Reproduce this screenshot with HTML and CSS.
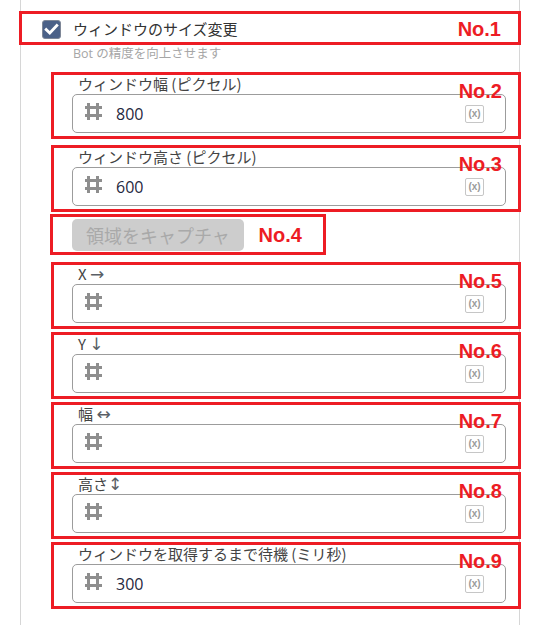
FILE: index.html
```html
<!DOCTYPE html>
<html lang="ja">
<head>
<meta charset="utf-8">
<title>ウィンドウのサイズ変更</title>
<link rel="stylesheet" href="styles.css">
</head>
<body>
<div class="panel">
  <div class="check-row">
    <span class="checkbox">
      <svg width="17" height="17" viewBox="0 0 17 17"><path d="M3.2 8.6 L6.8 12 L13.8 4.6" fill="none" stroke="#fff" stroke-width="2.8" stroke-linecap="square"/></svg>
    </span>
    <span class="check-title">ウィンドウのサイズ変更</span>
    <div class="mark mark-row"><span class="mark-no">No.1</span></div>
  </div>
  <div class="hint">Bot の精度を向上させます</div>

  <div class="fields">
    <div class="field field-first">
      <div class="field-label">ウィンドウ幅 (ピクセル)</div>
      <div class="input">
        <svg class="hash" width="17" height="17" viewBox="0 0 17 17"><path d="M3.5 0v17M12.5 0v17M0 4.5h17M0 12.5h17" stroke="#8e8e8e" stroke-width="3"/></svg>
        <span class="value">800</span>
        <span class="var">(x)</span>
      </div>
      <div class="mark"><span class="mark-no">No.2</span></div>
    </div>

    <div class="field field-second">
      <div class="field-label">ウィンドウ高さ (ピクセル)</div>
      <div class="input">
        <svg class="hash" width="17" height="17" viewBox="0 0 17 17"><path d="M3.5 0v17M12.5 0v17M0 4.5h17M0 12.5h17" stroke="#8e8e8e" stroke-width="3"/></svg>
        <span class="value">600</span>
        <span class="var">(x)</span>
      </div>
      <div class="mark"><span class="mark-no">No.3</span></div>
    </div>

    <div class="action">
      <button class="capture" type="button" disabled>領域をキャプチャ</button>
      <div class="mark mark-action"><span class="mark-no">No.4</span></div>
    </div>

    <div class="field field-after-action">
      <div class="field-label">X <span class="arrow">&#x2192;&#xFE0E;</span></div>
      <div class="input">
        <svg class="hash" width="17" height="17" viewBox="0 0 17 17"><path d="M3.5 0v17M12.5 0v17M0 4.5h17M0 12.5h17" stroke="#8e8e8e" stroke-width="3"/></svg>
        <span class="value"></span>
        <span class="var">(x)</span>
      </div>
      <div class="mark"><span class="mark-no">No.5</span></div>
    </div>

    <div class="field">
      <div class="field-label">Y <span class="arrow">&#x2193;&#xFE0E;</span></div>
      <div class="input">
        <svg class="hash" width="17" height="17" viewBox="0 0 17 17"><path d="M3.5 0v17M12.5 0v17M0 4.5h17M0 12.5h17" stroke="#8e8e8e" stroke-width="3"/></svg>
        <span class="value"></span>
        <span class="var">(x)</span>
      </div>
      <div class="mark"><span class="mark-no">No.6</span></div>
    </div>

    <div class="field">
      <div class="field-label">幅 <span class="arrow">&#x2194;&#xFE0E;</span></div>
      <div class="input">
        <svg class="hash" width="17" height="17" viewBox="0 0 17 17"><path d="M3.5 0v17M12.5 0v17M0 4.5h17M0 12.5h17" stroke="#8e8e8e" stroke-width="3"/></svg>
        <span class="value"></span>
        <span class="var">(x)</span>
      </div>
      <div class="mark"><span class="mark-no">No.7</span></div>
    </div>

    <div class="field">
      <div class="field-label">高さ<span class="arrow">&#x2195;&#xFE0E;</span></div>
      <div class="input">
        <svg class="hash" width="17" height="17" viewBox="0 0 17 17"><path d="M3.5 0v17M12.5 0v17M0 4.5h17M0 12.5h17" stroke="#8e8e8e" stroke-width="3"/></svg>
        <span class="value"></span>
        <span class="var">(x)</span>
      </div>
      <div class="mark"><span class="mark-no">No.8</span></div>
    </div>

    <div class="field">
      <div class="field-label">ウィンドウを取得するまで待機 (ミリ秒)</div>
      <div class="input">
        <svg class="hash" width="17" height="17" viewBox="0 0 17 17"><path d="M3.5 0v17M12.5 0v17M0 4.5h17M0 12.5h17" stroke="#8e8e8e" stroke-width="3"/></svg>
        <span class="value">300</span>
        <span class="var">(x)</span>
      </div>
      <div class="mark"><span class="mark-no">No.9</span></div>
    </div>
  </div>
</div>
</body>
</html>
```

FILE: styles.css
```css
html, body {
  margin: 0;
  padding: 0;
  background: #ffffff;
}

body {
  font-family: "Open Sans", "Noto Sans CJK JP", sans-serif;
  color: #3a3a3a;
}

.panel {
  margin-left: 20px;
  width: 500px;
  min-height: 625px;
  box-sizing: border-box;
  border-left: 1px solid #d6d6d6;
  border-right: 1px solid #d6d6d6;
  padding-top: 19px;
}

.check-row {
  position: relative;
  display: flex;
  align-items: center;
  gap: 12px;
  height: 20px;
  padding-left: 21px;
}

.checkbox {
  width: 19px;
  height: 19px;
  box-sizing: border-box;
  background: #4b6188;
  border: 1px solid #7e8797;
  border-radius: 3px;
  display: flex;
  align-items: center;
  justify-content: center;
}

.check-title {
  font-family: "Noto Sans CJK JP", sans-serif;
  font-size: 15px;
  line-height: 20px;
  color: #333333;
}

.hint {
  margin: 6px 0 0 52px;
  font-size: 12.5px;
  line-height: 18px;
  color: #a6a6a6;
}

.fields {
  margin-left: 51px;
  margin-right: 13px;
}

.field {
  position: relative;
  margin-top: 10px;
}

.field-second {
  margin-top: 13px;
}

.field-after-action {
  margin-top: 12px;
}

.field-label {
  padding-left: 6px;
  height: 21px;
  font-family: "Noto Sans CJK JP", sans-serif;
  font-size: 15px;
  line-height: 21px;
  color: #444444;
  white-space: nowrap;
}

.arrow {
  font-family: "DejaVu Sans", sans-serif;
  font-size: 17px;
  line-height: 21px;
  color: #5a5f66;
  font-variant-emoji: text;
}

.input {
  height: 39px;
  box-sizing: border-box;
  border: 1px solid #9c9c9c;
  border-radius: 5px;
  display: flex;
  align-items: center;
  padding: 0 21px 0 12px;
}

.hash {
  flex: none;
  margin-bottom: 4px;
}

.value {
  margin-left: 14px;
  font-size: 16px;
  line-height: 20px;
  color: #1f2840;
}

.var {
  margin-left: auto;
  width: 19px;
  height: 18px;
  box-sizing: border-box;
  border: 1px solid #c6c6c6;
  border-radius: 2px;
  display: flex;
  align-items: center;
  justify-content: center;
  font-family: "Liberation Sans", Arial, sans-serif;
  font-weight: bold;
  font-size: 10px;
  color: #9a9a9a;
}

.action {
  position: relative;
  margin-top: 13px;
  width: fit-content;
}

.capture {
  display: block;
  height: 32px;
  padding: 0 14px;
  border: none;
  border-radius: 5px;
  background: #cdcdcd;
  color: #a9a9a9;
  font-family: "Noto Sans CJK JP", sans-serif;
  font-size: 18px;
  line-height: 32px;
}

/* annotation overlays */
.mark {
  position: absolute;
  top: -1px;
  bottom: -6px;
  left: -21px;
  right: -15px;
  box-sizing: border-box;
  border: 3px solid #ed1c24;
  display: flex;
  justify-content: flex-end;
  align-items: flex-start;
  padding: 6px 16px 0 0;
  pointer-events: none;
}

.mark-row {
  top: -8px;
  bottom: -6px;
  left: -2px;
  right: -2px;
  align-items: center;
  padding: 2px 17px 0 0;
}

.mark-action {
  top: -5px;
  bottom: -4px;
  left: -22px;
  right: -82px;
  align-items: center;
  padding: 1px 21px 0 0;
}

.mark-no {
  font-family: "Liberation Sans", Arial, sans-serif;
  font-weight: bold;
  font-size: 20px;
  line-height: 20px;
  color: #ed1c24;
}
```
